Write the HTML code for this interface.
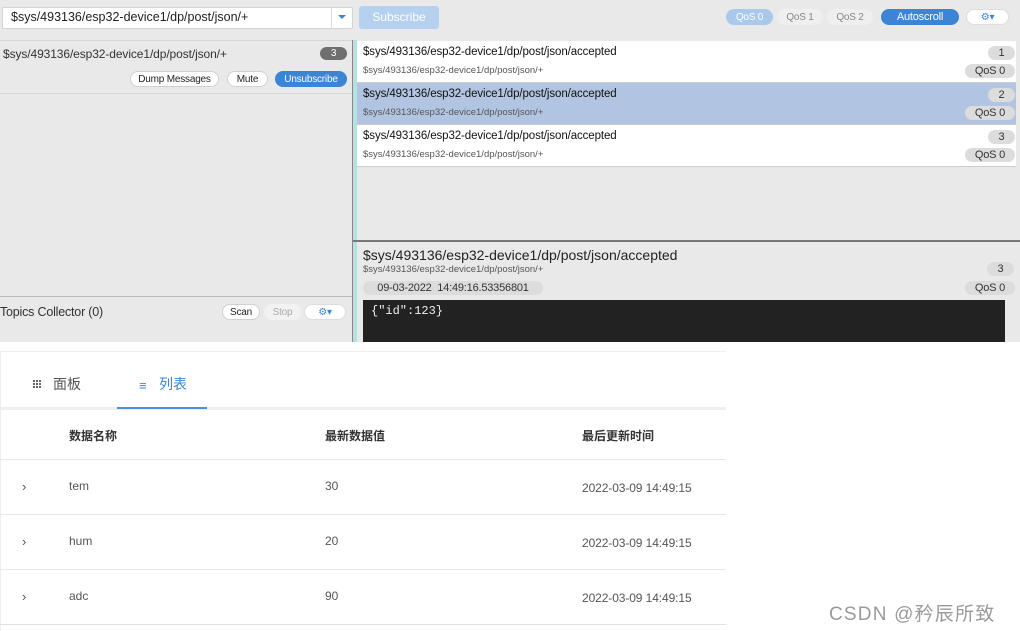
<!DOCTYPE html>
<html><head><meta charset="utf-8"><style>
*{box-sizing:border-box;margin:0;padding:0}
body{width:1020px;height:631px;position:relative;background:#fff;font-family:"Liberation Sans","Noto Sans CJK SC",sans-serif;overflow:hidden;color:#222}
.a{position:absolute}
.pill{position:absolute;border-radius:9px;font-size:10px;text-align:center;height:16px;line-height:17px;letter-spacing:-0.2px}
.t{font-size:11.5px;letter-spacing:-0.1px;white-space:nowrap;color:#111}
.s{font-size:9.5px;letter-spacing:0;color:#555;white-space:nowrap}
.g{background:#dcdcdc;color:#333}
.w{background:#fff;color:#222;border:1px solid #d0d0d0;line-height:15px}
.b{background:#3b84d6;color:#fff}
.zh{font-family:"Liberation Sans","Noto Sans CJK SC",sans-serif}
</style></head><body>
<div class="a" style="left:0;top:0;width:1020px;height:342px;background:#e9e9e9"></div>
<div class="a" style="left:2px;top:7px;width:351px;height:22px;background:#fff;border:1px solid #d4d4d4;border-radius:2px"></div>
<div class="a" style="left:11px;top:10px;font-size:12.5px;white-space:nowrap">$sys/493136/esp32-device1/dp/post/json/+</div>
<div class="a" style="left:331px;top:8px;width:1px;height:20px;background:#ddd"></div>
<div class="a" style="left:338px;top:15px;border-left:4px solid transparent;border-right:4px solid transparent;border-top:4px solid #3b84d6"></div>
<div class="a" style="left:359px;top:6px;width:80px;height:23px;background:#b6d1f0;border-radius:3px;color:#fff;font-size:12px;text-align:center;line-height:23px">Subscribe</div>
<div class="pill" style="left:726px;top:9px;width:47px;background:#a9c8ec;color:#fff">QoS 0</div>
<div class="pill" style="left:777px;top:9px;width:46px;background:#efefef;color:#888">QoS 1</div>
<div class="pill" style="left:827px;top:9px;width:46px;background:#efefef;color:#888">QoS 2</div>
<div class="pill b" style="left:881px;top:9px;width:78px;font-size:11px">Autoscroll</div>
<div class="pill" style="left:966px;top:9px;width:43px;background:#fff;border:1px solid #ddd;color:#3b84d6;line-height:15px">⚙▾</div>
<div class="a" style="left:0;top:40px;width:352px;height:1px;background:#d6d6d6"></div>
<div class="a t" style="left:3px;top:47px;font-size:12px;color:#333">$sys/493136/esp32-device1/dp/post/json/+</div>
<div class="pill" style="left:320px;top:47px;width:27px;height:13px;line-height:13px;background:#6f6f6f;color:#fff">3</div>
<div class="pill w" style="left:130px;top:71px;width:89px">Dump Messages</div>
<div class="pill w" style="left:227px;top:71px;width:41px">Mute</div>
<div class="pill b" style="left:275px;top:71px;width:72px">Unsubscribe</div>
<div class="a" style="left:0;top:93px;width:352px;height:1px;background:#d6d6d6"></div>
<div class="a" style="left:0;top:296px;width:352px;height:1px;background:#bbb"></div>
<div class="a" style="left:0;top:305px;font-size:12.5px;letter-spacing:-0.2px;color:#333">Topics Collector (0)</div>
<div class="pill w" style="left:222px;top:304px;width:38px">Scan</div>
<div class="pill" style="left:264px;top:304px;width:37px;background:#f2f2f2;color:#aaa">Stop</div>
<div class="pill" style="left:304px;top:304px;width:42px;background:#fff;border:1px solid #ddd;color:#3b84d6;line-height:15px">⚙▾</div>
<div class="a" style="left:352px;top:40px;width:1px;height:302px;background:#888"></div>
<div class="a" style="left:353px;top:40px;width:4px;height:302px;background:#b4e2e0"></div>
<div class="a" style="left:357px;top:41px;width:659px;height:42px;background:#fff;border-bottom:1px solid #ccc"></div>
<div class="a" style="left:357px;top:83px;width:659px;height:42px;background:#b1c4e1;border-bottom:1px solid #ccc"></div>
<div class="a" style="left:357px;top:125px;width:659px;height:42px;background:#fff;border-bottom:1px solid #ccc"></div>
<div class="a t" style="left:363px;top:46px">$sys/493136/esp32-device1/dp/post/json/accepted</div>
<div class="a s" style="left:363px;top:65px">$sys/493136/esp32-device1/dp/post/json/+</div>
<div class="a t" style="left:363px;top:88px">$sys/493136/esp32-device1/dp/post/json/accepted</div>
<div class="a s" style="left:363px;top:107px">$sys/493136/esp32-device1/dp/post/json/+</div>
<div class="a t" style="left:363px;top:130px">$sys/493136/esp32-device1/dp/post/json/accepted</div>
<div class="a s" style="left:363px;top:149px">$sys/493136/esp32-device1/dp/post/json/+</div>
<div class="pill g" style="left:988px;top:46px;width:27px;height:14px;line-height:14px;font-size:11px">1</div>
<div class="pill g" style="left:965px;top:64px;width:50px;height:14px;line-height:14px;font-size:11px">QoS 0</div>
<div class="pill g" style="left:988px;top:88px;width:27px;height:14px;line-height:14px;font-size:11px">2</div>
<div class="pill g" style="left:965px;top:106px;width:50px;height:14px;line-height:14px;font-size:11px">QoS 0</div>
<div class="pill g" style="left:988px;top:130px;width:27px;height:14px;line-height:14px;font-size:11px">3</div>
<div class="pill g" style="left:965px;top:148px;width:50px;height:14px;line-height:14px;font-size:11px">QoS 0</div>
<div class="a" style="left:353px;top:240px;width:667px;height:2px;background:#777"></div>
<div class="a" style="left:363px;top:247px;font-size:14px;letter-spacing:0;white-space:nowrap">$sys/493136/esp32-device1/dp/post/json/accepted</div>
<div class="a s" style="left:363px;top:264px">$sys/493136/esp32-device1/dp/post/json/+</div>
<div class="pill g" style="left:987px;top:262px;width:27px;height:14px;line-height:14px;font-size:11px">3</div>
<div class="pill g" style="left:363px;top:281px;width:180px;height:14px;line-height:14px;font-size:11px">09-03-2022 &nbsp;14:49:16.53356801</div>
<div class="pill g" style="left:965px;top:281px;width:50px;height:14px;line-height:14px;font-size:11px">QoS 0</div>
<div class="a" style="left:363px;top:300px;width:642px;height:42px;background:#222"></div>
<div class="a" style="left:371px;top:304px;color:#eee;font-family:'Liberation Mono',monospace;font-size:12px">{"id":123}</div>
<div class="a" style="left:0;top:351px;width:726px;height:1px;background:#eee"></div>
<div class="a" style="left:0;top:351px;width:1px;height:280px;background:#eee"></div>
<div class="a" style="left:33px;top:380px;width:8px;height:8px;background:repeating-linear-gradient(90deg,#666 0 2px,transparent 2px 3px);-webkit-mask:repeating-linear-gradient(#000 0 2px,transparent 2px 3px)"></div>
<div class="a zh" style="left:53px;top:374px;font-size:14px;color:#555">面板</div>
<div class="a" style="left:139px;top:378px;font-size:13px;color:#3b84d6">≡</div>
<div class="a zh" style="left:159px;top:374px;font-size:14px;color:#3b84d6">列表</div>
<div class="a" style="left:0;top:407px;width:726px;height:3px;background:#eee"></div>
<div class="a" style="left:117px;top:407px;width:90px;height:2px;background:#4a8fe2"></div>
<div class="a zh" style="left:69px;top:427px;font-size:12px;font-weight:bold;color:#333">数据名称</div>
<div class="a zh" style="left:325px;top:427px;font-size:12px;font-weight:bold;color:#333">最新数据值</div>
<div class="a zh" style="left:582px;top:427px;font-size:12px;font-weight:bold;color:#333">最后更新时间</div>
<div class="a" style="left:0;top:459px;width:726px;height:1px;background:#e8e8e8"></div>
<div class="a" style="left:0;top:514px;width:726px;height:1px;background:#e8e8e8"></div>
<div class="a" style="left:0;top:569px;width:726px;height:1px;background:#e8e8e8"></div>
<div class="a" style="left:0;top:624px;width:726px;height:1px;background:#e0e0e0"></div>
<div class="a" style="left:22px;top:479px;font-size:13px;color:#555">›</div>
<div class="a" style="left:22px;top:534px;font-size:13px;color:#555">›</div>
<div class="a" style="left:22px;top:589px;font-size:13px;color:#555">›</div>
<div class="a" style="left:69px;top:479px;font-size:12px;color:#555">tem</div>
<div class="a" style="left:69px;top:534px;font-size:12px;color:#555">hum</div>
<div class="a" style="left:69px;top:589px;font-size:12px;color:#555">adc</div>
<div class="a" style="left:325px;top:479px;font-size:12px;color:#555">30</div>
<div class="a" style="left:325px;top:534px;font-size:12px;color:#555">20</div>
<div class="a" style="left:325px;top:589px;font-size:12px;color:#555">90</div>
<div class="a" style="left:582px;top:481px;font-size:12px;color:#555;letter-spacing:-0.1px">2022-03-09 14:49:15</div>
<div class="a" style="left:582px;top:536px;font-size:12px;color:#555;letter-spacing:-0.1px">2022-03-09 14:49:15</div>
<div class="a" style="left:582px;top:591px;font-size:12px;color:#555;letter-spacing:-0.1px">2022-03-09 14:49:15</div>
<div class="a zh" style="left:829px;top:599px;font-size:19px;letter-spacing:1.2px;color:#9a9a9a;white-space:nowrap">CSDN @矜辰所致</div>
</body></html>
